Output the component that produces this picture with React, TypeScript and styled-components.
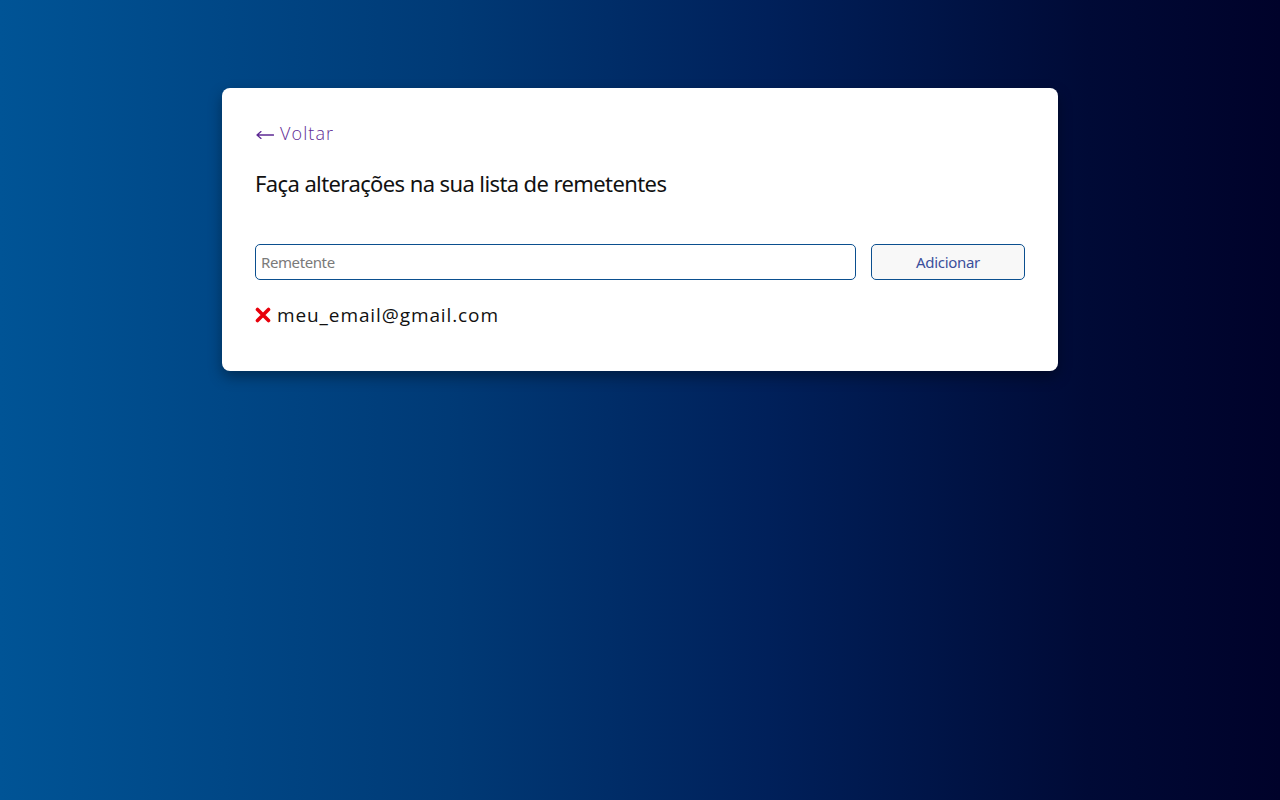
import React from "react";
import styled, { createGlobalStyle } from "styled-components";

const Global = createGlobalStyle`
  html, body { margin: 0; padding: 0; height: 100%; }
  body {
    background: linear-gradient(90deg, #005496 0%, #003a76 35%, #00205a 60%, #000a36 85%, #00022a 100%);
    min-height: 800px;
    font-family: "Open Sans", sans-serif;
  }
  * { box-sizing: border-box; }
`;

const Page = styled.div`
  display: flex;
  justify-content: center;
  padding-top: 88px;
`;

const Card = styled.div`
  width: 836px;
  background: #fff;
  border-radius: 8px;
  box-shadow: 0 6px 14px rgba(0, 0, 0, 0.35);
  padding: 33px 33px 44px;
  display: flex;
  flex-direction: column;
`;

const Back = styled.a`
  display: flex;
  align-items: center;
  gap: 6px;
  color: #5e2a94;
  font-family: "Open Sans", sans-serif;
  font-weight: 300;
  font-size: 18px;
  line-height: 24px;
  text-decoration: none;
  letter-spacing: 1.1px;
  cursor: pointer;
`;

const Arrow = styled.svg`
  display: block;
  margin-left: 1px;
  margin-top: 3px;
`;

const Title = styled.h2`
  margin: 24px 0 0;
  font-family: "Noto Sans", sans-serif;
  font-weight: 400;
  font-size: 22px;
  line-height: 28px;
  letter-spacing: -0.6px;
  color: #111;
`;

const Form = styled.div`
  display: flex;
  gap: 15px;
  margin-top: 47px;
`;

const Input = styled.input`
  flex: 1;
  height: 36px;
  border: 1px solid #0b4f8f;
  border-radius: 5px;
  padding: 0 5px;
  font-family: "Noto Sans", sans-serif;
  font-size: 15px;
  letter-spacing: -0.4px;
  color: #333;
  outline: none;
  &::placeholder { color: #7a7a7a; }
`;

const Button = styled.button`
  width: 154px;
  height: 36px;
  border: 1px solid #0b4f8f;
  border-radius: 5px;
  background: #f8f8f8;
  color: #3b4f9c;
  font-family: "Noto Sans", sans-serif;
  font-size: 15px;
  letter-spacing: -0.3px;
  cursor: pointer;
`;

const List = styled.ul`
  list-style: none;
  margin: 23px 0 0;
  padding: 0;
`;

const Item = styled.li`
  display: flex;
  align-items: center;
  gap: 6px;
  font-family: "Open Sans", sans-serif;
  font-size: 19px;
  line-height: 24px;
  letter-spacing: 0.9px;
  color: #111;
`;

const Remove = styled.span`
  display: inline-flex;
  width: 16px;
  height: 16px;
  cursor: pointer;
`;

export default function App() {
  return (
    <>
      <Global />
      <Page>
        <Card>
          <Back>
            <Arrow width="18" height="10" viewBox="0 0 18 10" aria-hidden="true">
              <path d="M1 5 H17.5 M1 5 L5 1.6 M1 5 L5 8.4" stroke="#5e2a94" strokeWidth="1.3" fill="none" strokeLinecap="round" />
            </Arrow>
            Voltar
          </Back>
          <Title>Faça alterações na sua lista de remetentes</Title>
          <Form>
            <Input placeholder="Remetente" />
            <Button>Adicionar</Button>
          </Form>
          <List>
            <Item>
              <Remove>
                <svg width="16" height="16" viewBox="0 0 16 16">
                  <path d="M2.5 2.5 L13.5 13.5 M13.5 2.5 L2.5 13.5" stroke="#e8000b" strokeWidth="3.6" strokeLinecap="round" />
                </svg>
              </Remove>
              meu_email@gmail.com
            </Item>
          </List>
        </Card>
      </Page>
    </>
  );
}
